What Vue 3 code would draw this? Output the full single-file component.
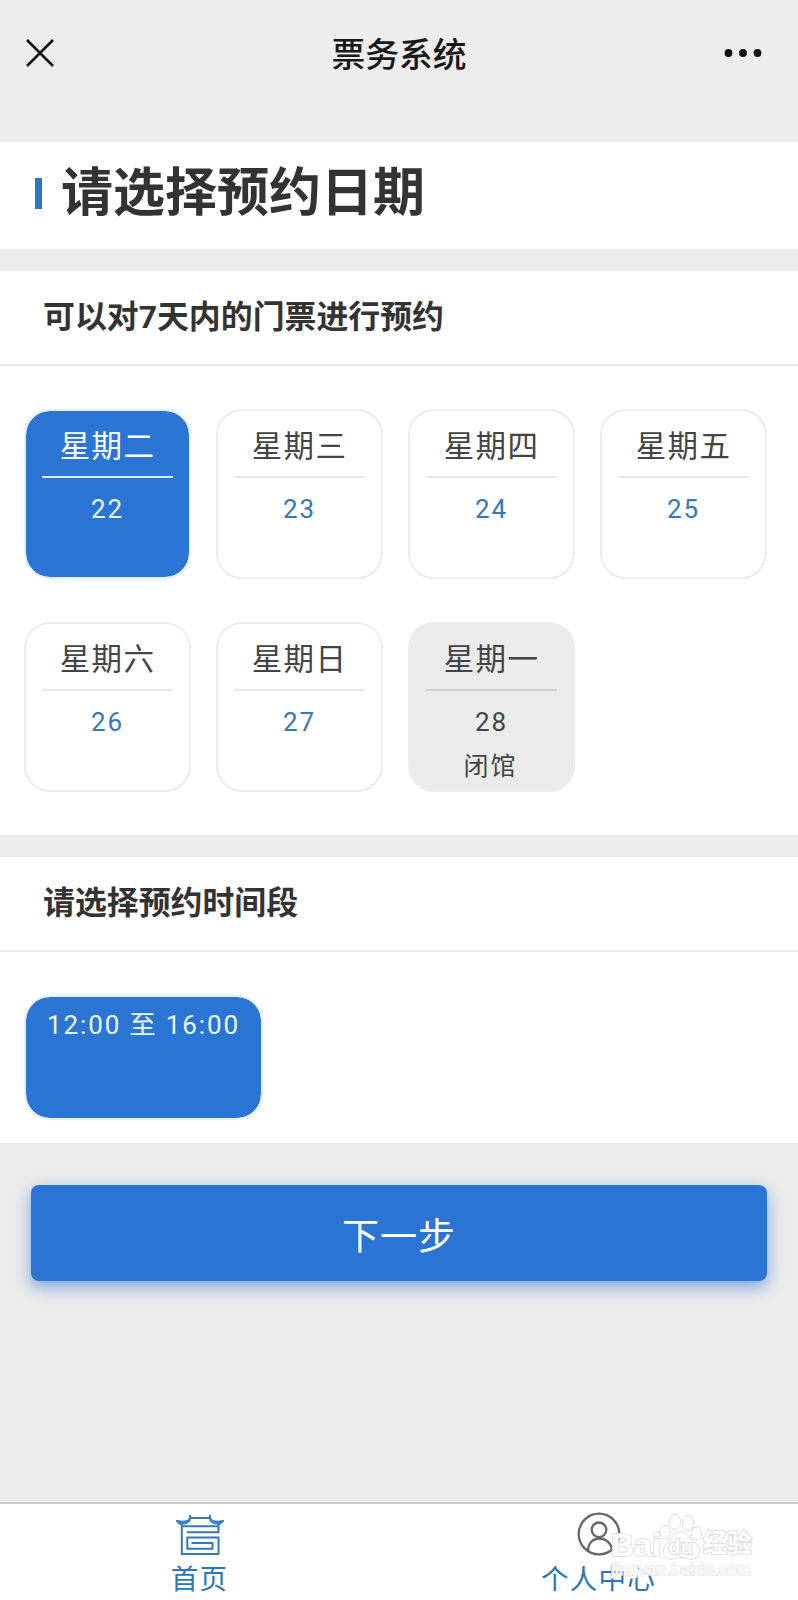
<script setup>
const days = [
  { name: '星期二', date: '22', state: 'active' },
  { name: '星期三', date: '23' },
  { name: '星期四', date: '24' },
  { name: '星期五', date: '25' },
  { name: '星期六', date: '26' },
  { name: '星期日', date: '27' },
  { name: '星期一', date: '28', state: 'closed', note: '闭馆' },
]
</script>

<template>
  <div class="page">
    <header class="nav">
      <svg class="close" viewBox="0 0 28 28"><path d="M1 1L27 27M27 1L1 27" /></svg>
      <h1>票务系统</h1>
      <svg class="more" viewBox="0 0 38 10">
        <circle cx="4.5" cy="5" r="3.9" /><circle cx="19" cy="5" r="3.9" /><circle cx="33.5" cy="5" r="3.9" />
      </svg>
    </header>

    <section class="title">
      <span class="mark"></span>
      <h2>请选择预约日期</h2>
    </section>

    <section class="panel dates">
      <h3>可以对7天内的门票进行预约</h3>
      <div class="grid">
        <div v-for="d in days" :key="d.date" class="day" :class="d.state">
          <div class="week">{{ d.name }}</div>
          <div class="num">{{ d.date }}</div>
          <div v-if="d.note" class="note">{{ d.note }}</div>
        </div>
      </div>
    </section>

    <section class="panel times">
      <h3>请选择预约时间段</h3>
      <div class="slot">12:00 至 16:00</div>
    </section>

    <button class="next">下一步</button>

    <footer class="tabs">
      <div class="tab">
        <svg class="home" viewBox="0 0 48 42">
          <path class="roof" d="M14 1V4H34V1M14 4C13 7 10 8.500 1 7C3 9 5 10.500 6.500 11M34 4C35 7 38 8.500 47 7C45 9 43 10.500 41.500 11" />
          <path class="eave" d="M1 6.500C8 8 12 7.500 13.500 4L15 6C13.500 9.500 9 11 5 10.500ZM47 6.500C40 8 36 7.500 34.500 4L33 6C34.500 9.500 39 11 43 10.500Z" />
          <path d="M5.800 10V40H42.500V23.500H11.300V34.700H36.500V29H15.500M5.800 12.300H42.500V18.300H11" />
        </svg>
        <span>首页</span>
      </div>
      <div class="tab">
        <svg class="user" viewBox="0 0 44 44">
          <circle cx="22" cy="22" r="20.300" /><circle cx="22" cy="17.800" r="7.300" />
          <path d="M11 39C11 31 16 26.500 22.500 26.500S34 31 35 37.500" />
        </svg>
        <span>个人中心</span>
      </div>
      <div class="watermark">
        <div class="brand">
          <span class="bai">Bai</span>
          <svg viewBox="0 0 42 46">
            <ellipse cx="5" cy="18" rx="5" ry="6.500" /><ellipse cx="15" cy="8" rx="5.300" ry="7.500" />
            <ellipse cx="28" cy="9" rx="5.300" ry="7.500" /><ellipse cx="36.500" cy="19.500" rx="5" ry="6.500" />
            <path d="M20 18C13 18 12 26 7 30C1 35 3 45 11 45C16 45 18 43 21 43S27 45 32 45C40 45 42 35 36 30C31 26 27 18 20 18Z" />
            <text x="20.500" y="40" text-anchor="middle">du</text>
          </svg>
          <span class="cn">经验</span>
        </div>
        <div class="url">jingyan.baidu.com</div>
      </div>
    </footer>
  </div>
</template>

<style>
body { margin: 0; background: #ebebeb; }
</style>

<style scoped>
* { box-sizing: border-box; }
.page {
  width: 798px;
  height: 1600px;
  display: flex;
  flex-direction: column;
  overflow: hidden;
  background: #ebebeb;
  color: #333;
  font-family: Roboto, "Noto Sans CJK SC", sans-serif;
}
h1, h2, h3 { margin: 0; }
.nav {
  height: 142px;
  padding: 0 36px 37px 26px;
  display: grid;
  grid-template-columns: 38px 1fr 38px;
  align-items: center;
  background: #ededed;
}
.close { width: 28px; height: 28px; fill: none; stroke: #111; stroke-width: 2.5; }
.more { width: 38px; height: 10px; fill: #111; }
.nav h1 { padding: 7px 0 0 10px; text-align: center; font-size: 33.8px; font-weight: 500; line-height: 46px; color: #181818; }
.title { height: 107px; display: flex; align-items: center; padding: 0 0 4px 35px; background: #fff; }
.mark { width: 7px; height: 31px; background: #2b75c9; }
.title h2 { margin-left: 19px; font-size: 52px; font-weight: 700; line-height: 70px; }
.panel { margin-top: 22px; background: #fff; }
.dates { height: 564px; }
.times { height: 286px; }
h3 {
  height: 95px;
  padding: 0 43px;
  line-height: 93px;
  font-size: 31.9px;
  font-weight: 700;
  border-bottom: 2px solid #ebebeb;
}
.grid {
  display: grid;
  grid-template-columns: repeat(4, 167px);
  grid-auto-rows: 170px;
  gap: 43px 25px;
  padding: 43px 0 0 24px;
}
.day {
  padding: 15px 16px 0;
  border: 2px solid #ececec;
  border-radius: 26px;
  text-align: center;
}
.week { height: 52px; line-height: 42px; font-size: 30.5px; letter-spacing: 1.3px; border-bottom: 2px solid #e8e8e8; color: #444; }
.num { margin-top: 15px; line-height: 32px; font-size: 26px; letter-spacing: 2px; color: #3478b8; }
.note { margin-top: 12px; padding-right: 2px; line-height: 34px; font-size: 25px; letter-spacing: 2px; color: #444; }
.active { border-color: #e2f0ff; background: #2a75d3; background-clip: padding-box; }
.active .week { color: #fff; border-color: #d5efff; }
.active .num { color: #e8faff; }
.closed { background: #ebebeb; }
.closed .week { border-color: #d0d0d0; }
.closed .num { color: #444; }
.slot {
  width: 239px;
  height: 125px;
  margin: 43px 0 0 24px;
  padding-top: 11px;
  border: 2px solid #e2f0ff;
  border-radius: 26px;
  background: #2a75d3;
  background-clip: padding-box;
  color: #e8faff;
  text-align: center;
  line-height: 34px;
  font-size: 26px;
  letter-spacing: 1.9px;
}
.next {
  width: 736px;
  height: 96px;
  margin: 42px 0 0 31px;
  padding: 2px 0 0;
  border: 0;
  border-radius: 8px;
  background: #2a75d3;
  box-shadow: 0 6px 16px rgba(42, 117, 211, .6);
  color: #fff;
  font: 400 37px Roboto, "Noto Sans CJK SC", sans-serif;
  letter-spacing: 1px;
}
.tabs {
  position: relative;
  height: 98px;
  margin-top: auto;
  display: grid;
  grid-template-columns: 1fr 1fr;
  border-top: 2px solid #ccc;
  background: #fff;
}
.tab { display: flex; flex-direction: column; align-items: center; color: #2b75b9; }
.tab span { margin-top: 2px; line-height: 38px; font-size: 27.5px; letter-spacing: 1.3px; }
.home { width: 48px; height: 42px; margin-top: 10px; margin-bottom: 3px; fill: none; stroke: #3478b8; stroke-width: 2; }
.roof { stroke-width: 1.8; }
.eave { fill: #3b82cc; stroke: none; }
.user { width: 44px; height: 44px; margin-top: 8px; margin-bottom: 3px; fill: none; stroke: #666; stroke-width: 2.3; }
.watermark { position: absolute; left: 611px; top: 8px; width: 145px; }
.brand { height: 48px; display: flex; align-items: flex-end; font: 700 32px/29px "Liberation Sans", "Noto Sans CJK SC", sans-serif; color: #fff; -webkit-text-stroke: 2px #e0e0e0; paint-order: stroke fill; }
.bai { width: 50px; }
.brand svg { width: 42px; height: 46px; margin: 0 1px 0 -1px; fill: rgba(255, 255, 255, .8); stroke: #dadada; stroke-width: 1.3; overflow: visible; }
.brand text { font-size: 20px; fill: #fff; stroke-width: 2; -webkit-text-stroke: 0; }
.brand .cn { font-size: 24.5px; line-height: 32px; }
.url { font: 17px/20px "Liberation Sans", sans-serif; letter-spacing: .2px; color: #fff; -webkit-text-stroke: 1.6px #e6e6e6; paint-order: stroke fill; white-space: nowrap; }
</style>
